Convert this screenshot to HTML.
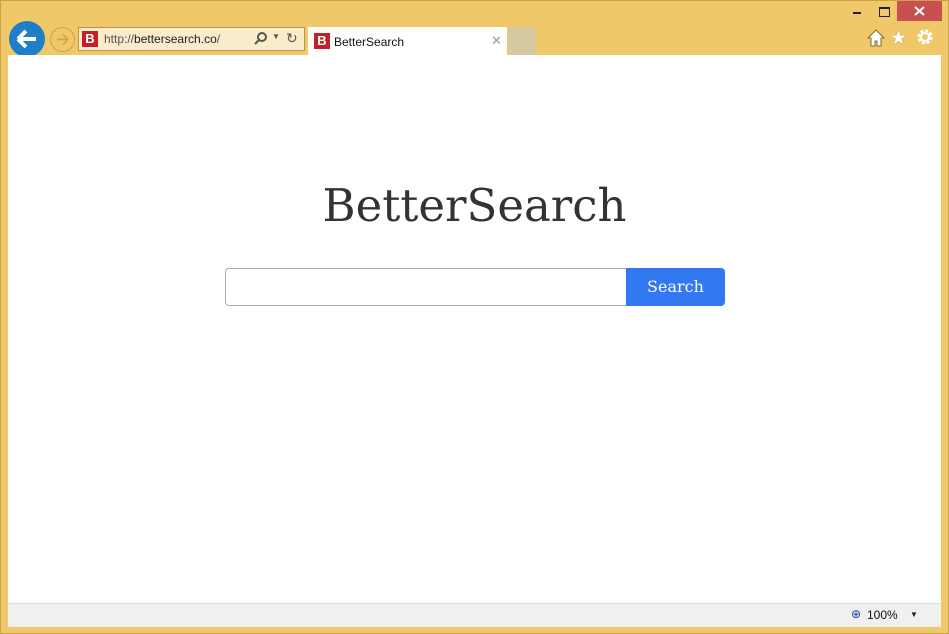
<!DOCTYPE html><html><head><style>
body{margin:0;width:949px;height:634px;background:#f0c86a;position:relative;overflow:hidden;font-family:"Liberation Sans",sans-serif}
.a{position:absolute}
</style></head><body>
<div class="a" style="left:0;top:0;width:947px;height:632px;border:1px solid #c9a24a"></div>
<div class="a" style="left:897px;top:1px;width:45px;height:20px;background:#c75050"></div>
<svg class="a" style="left:897px;top:1px" width="45" height="20"><path d="M18 6L27 14M27 6L18 14" stroke="#fff" stroke-width="2"/></svg>
<div class="a" style="left:853px;top:12px;width:8px;height:2px;background:#222"></div>
<div class="a" style="left:879px;top:7px;width:9px;height:7px;border:1px solid #222;border-top-width:2px"></div>
<div class="a" style="left:9px;top:21px;width:36px;height:36px;border-radius:50%;background:#1e7fc8"></div>
<svg class="a" style="left:9px;top:21px" width="36" height="36"><path d="M9 18H27M9 18L17 10M9 18L17 26" stroke="#fff" stroke-width="4" fill="none"/></svg>
<div class="a" style="left:50px;top:27px;width:23px;height:23px;border-radius:50%;border:1px solid #c9a24a"></div>
<svg class="a" style="left:51px;top:28px" width="23" height="23"><path d="M6 11.5H17M12 6.5L17 11.5L12 16.5" stroke="#c9a24a" stroke-width="1.5" fill="none"/></svg>
<div class="a" style="left:78px;top:27px;width:225px;height:22px;background:#faeccb;border:1px solid #b8974a"></div>
<div class="a" style="left:82px;top:31px;width:16px;height:16px;background:#c4202a;color:#fff;font-weight:bold;font-size:13px;line-height:16px;text-align:center">B</div>
<div class="a" style="left:104px;top:32px;font-size:12px;color:#555">http://<span style="color:#222">bettersearch.co</span>/</div>
<svg class="a" style="left:253px;top:31px" width="16" height="16"><circle cx="9" cy="6" r="4" stroke="#555" stroke-width="2" fill="none"/><path d="M6 9L2 13" stroke="#555" stroke-width="2"/></svg>
<div class="a" style="left:272px;top:32px;font-size:8px;color:#555">▼</div>
<div class="a" style="left:286px;top:30px;font-size:14px;color:#555">↻</div>
<div class="a" style="left:308px;top:27px;width:199px;height:28px;background:#fff"></div>
<div class="a" style="left:314px;top:33px;width:16px;height:16px;background:#c4202a;color:#fff;font-weight:bold;font-size:13px;line-height:16px;text-align:center">B</div>
<div class="a" style="left:334px;top:35px;font-size:12px;color:#111">BetterSearch</div>
<div class="a" style="left:491px;top:33px;font-size:13px;color:#999">✕</div>
<div class="a" style="left:508px;top:27px;width:28px;height:28px;background:#d6c8a0"></div>
<svg class="a" style="left:866px;top:28px" width="20" height="20"><path d="M2 10L10 2L18 10H15V18H11V13H9V18H5V10Z" fill="#fff" stroke="#8a6d2a" stroke-width="1"/></svg>
<div class="a" style="left:890px;top:27px;font-size:19px;color:#fff;text-shadow:0 0 1px #8a6d2a">★</div>
<svg class="a" style="left:916px;top:28px" width="20" height="20"><circle cx="9" cy="9" r="6" stroke="#fff" stroke-width="3" fill="none" stroke-dasharray="3 1.7"/><circle cx="9" cy="9" r="4" stroke="#fff" stroke-width="2" fill="none"/></svg>
<div class="a" style="left:8px;top:55px;width:933px;height:548px;background:#fff"></div>
<div class="a" style="left:8px;top:603px;width:933px;height:23px;background:#f0f0f0;border-top:1px solid #ddd"></div>
<div class="a" style="left:851px;top:607px;font-size:12px;color:#1a3d9a">⊕</div>
<div class="a" style="left:867px;top:608px;font-size:12px;color:#111">100%</div>
<div class="a" style="left:910px;top:610px;font-size:8px;color:#222">▼</div>
<div class="a" style="left:0;top:179px;width:949px;text-align:center;font-family:'DejaVu Serif','Liberation Serif',serif;font-size:45px;color:#333">BetterSearch</div>
<div class="a" style="left:225px;top:268px;width:400px;height:36px;border:1px solid #aaa;border-right:none;border-radius:4px 0 0 4px;background:#fff"></div>
<div class="a" style="left:626px;top:268px;width:99px;height:38px;background:#3278f0;border-radius:0 4px 4px 0;color:#fff;font-family:'DejaVu Serif',serif;font-size:16px;line-height:38px;text-align:center">Search</div>
</body></html>
